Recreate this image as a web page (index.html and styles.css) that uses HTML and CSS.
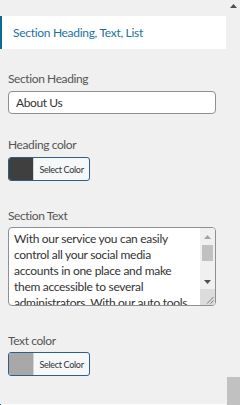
FILE: index.html
```html
<!DOCTYPE html>
<html lang="en">
<head>
<meta charset="utf-8">
<title>Section Heading, Text, List</title>
<link rel="stylesheet" href="styles.css">
</head>
<body>
<div class="frame">
  <div class="panel">
    <div class="section-title">Section Heading, Text, List</div>
    <div class="fields">
      <div class="label label-first">Section Heading</div>
      <div class="input">About Us</div>

      <div class="label label-after-input">Heading color</div>
      <div class="color-btn">
        <span class="swatch swatch-dark"></span>
        <span class="btn-text">Select Color</span>
      </div>

      <div class="label label-after-btn">Section Text</div>
      <div class="textarea">
        <div class="ta-text">With our service you can easily control all your social media accounts in one place and make them accessible to several administrators. With our auto tools.</div>
        <div class="ta-scroll">
          <div class="ta-arrow ta-up"><svg width="7" height="4" viewBox="0 0 7 4"><path d="M0 4L3.5 0L7 4Z" fill="#a3a3a3"/></svg></div>
          <div class="ta-thumb"></div>
          <div class="ta-track"></div>
          <div class="ta-arrow ta-down"><svg width="7" height="4" viewBox="0 0 7 4"><path d="M0 0L3.5 4L7 0Z" fill="#505050"/></svg></div>
          <div class="ta-corner"><svg width="8" height="8" viewBox="0 0 8 8"><path d="M7.5 1L1 7.5M7.5 4.5L4.5 7.5" stroke="#7a7a7a" stroke-width="1"/></svg></div>
        </div>
      </div>

      <div class="label label-after-ta">Text color</div>
      <div class="color-btn">
        <span class="swatch swatch-gray"></span>
        <span class="btn-text">Select Color</span>
      </div>
    </div>
    <div class="next-section"></div>
  </div>
  <div class="page-scroll">
    <div class="ps-arrow"><svg width="7" height="4" viewBox="0 0 7 4"><path d="M0 4L3.5 0L7 4Z" fill="#505050"/></svg></div>
    <div class="ps-track"></div>
    <div class="ps-thumb"></div>
  </div>
</div>
</body>
</html>
```
FILE: styles.css
```css
html, body {
  margin: 0;
  padding: 0;
  background: #f0f0f0;
  font-family: Lato, "Open Sans", sans-serif;
  color: #50575e;
}

.frame {
  display: flex;
  width: 240px;
  height: 405px;
  overflow: hidden;
}

.panel {
  flex: 1;
  display: flex;
  flex-direction: column;
}

.section-title {
  margin-top: 16px;
  width: 226px;
  height: 33px;
  box-sizing: border-box;
  background: #ffffff;
  border-left: 2px solid #0b6e8e;
  padding-left: 11px;
  display: flex;
  align-items: center;
  font-size: 12px;
  letter-spacing: -0.3px;
  color: #19739c;
}

.fields {
  padding: 0 8px;
  display: flex;
  flex-direction: column;
  align-items: flex-start;
}

.label {
  font-size: 12px;
  letter-spacing: -0.4px;
  line-height: 18px;
  color: #555555;
  margin-bottom: 3px;
}

.label-first { margin-top: 21px; }
.label-after-input { margin-top: 22px; }
.label-after-btn { margin-top: 26px; margin-bottom: 2px; }
.label-after-ta { margin-top: 26px; margin-bottom: 2px; }

.input {
  width: 208px;
  height: 23px;
  box-sizing: border-box;
  border: 1px solid #8c8f94;
  border-radius: 4px;
  background: #ffffff;
  padding: 0 7px;
  font-size: 12px;
  letter-spacing: -0.4px;
  line-height: 21px;
  color: #333333;
}

.color-btn {
  display: flex;
  width: 82px;
  height: 24px;
  box-sizing: border-box;
  border: 1px solid #2f5d85;
  border-radius: 3px;
  overflow: hidden;
  background: #f6f7f7;
}

.swatch {
  width: 24px;
  flex: none;
}

.swatch-dark { background: #3f3f3f; }
.swatch-gray { background: #a8a8a8; }

.btn-text {
  flex: 1;
  border-left: 1px solid #d0d4d8;
  display: flex;
  align-items: center;
  justify-content: center;
  font-size: 9px;
  letter-spacing: -0.3px;
  color: #2c3338;
}

.textarea {
  display: flex;
  width: 208px;
  height: 79px;
  box-sizing: border-box;
  border: 1px solid #8c8f94;
  border-radius: 4px;
  background: #ffffff;
  overflow: hidden;
}

.ta-text {
  flex: 1;
  padding: 3px 4px 0 5px;
  font-size: 12px;
  letter-spacing: -0.3px;
  line-height: 16px;
  color: #333333;
  overflow: hidden;
}

.ta-scroll {
  width: 15px;
  flex: none;
  display: flex;
  flex-direction: column;
  background: #f0f0f0;
}

.ta-arrow {
  height: 15px;
  display: flex;
  align-items: center;
  justify-content: center;
}

.ta-up { height: 17px; }

.ta-thumb {
  height: 16px;
  margin: 0 2px;
  background: #c1c1c1;
}

.ta-track { flex: 1; }

.ta-corner {
  height: 15px;
  background: #dcdcdc;
  display: flex;
  align-items: flex-end;
  justify-content: flex-end;
  padding: 0 1px 1px 0;
}

.next-section {
  margin-top: auto;
  height: 1px;
  width: 226px;
  background: #ffffff;
  border-left: 1px solid #0b6e8e;
  box-sizing: border-box;
}

.page-scroll {
  width: 13px;
  flex: none;
  display: flex;
  flex-direction: column;
  background: #f0f0f0;
}

.ps-arrow {
  height: 11px;
  display: flex;
  align-items: center;
  justify-content: center;
}

.ps-track { flex: 1; }

.ps-thumb {
  height: 28px;
  background: #c1c1c1;
}
```
